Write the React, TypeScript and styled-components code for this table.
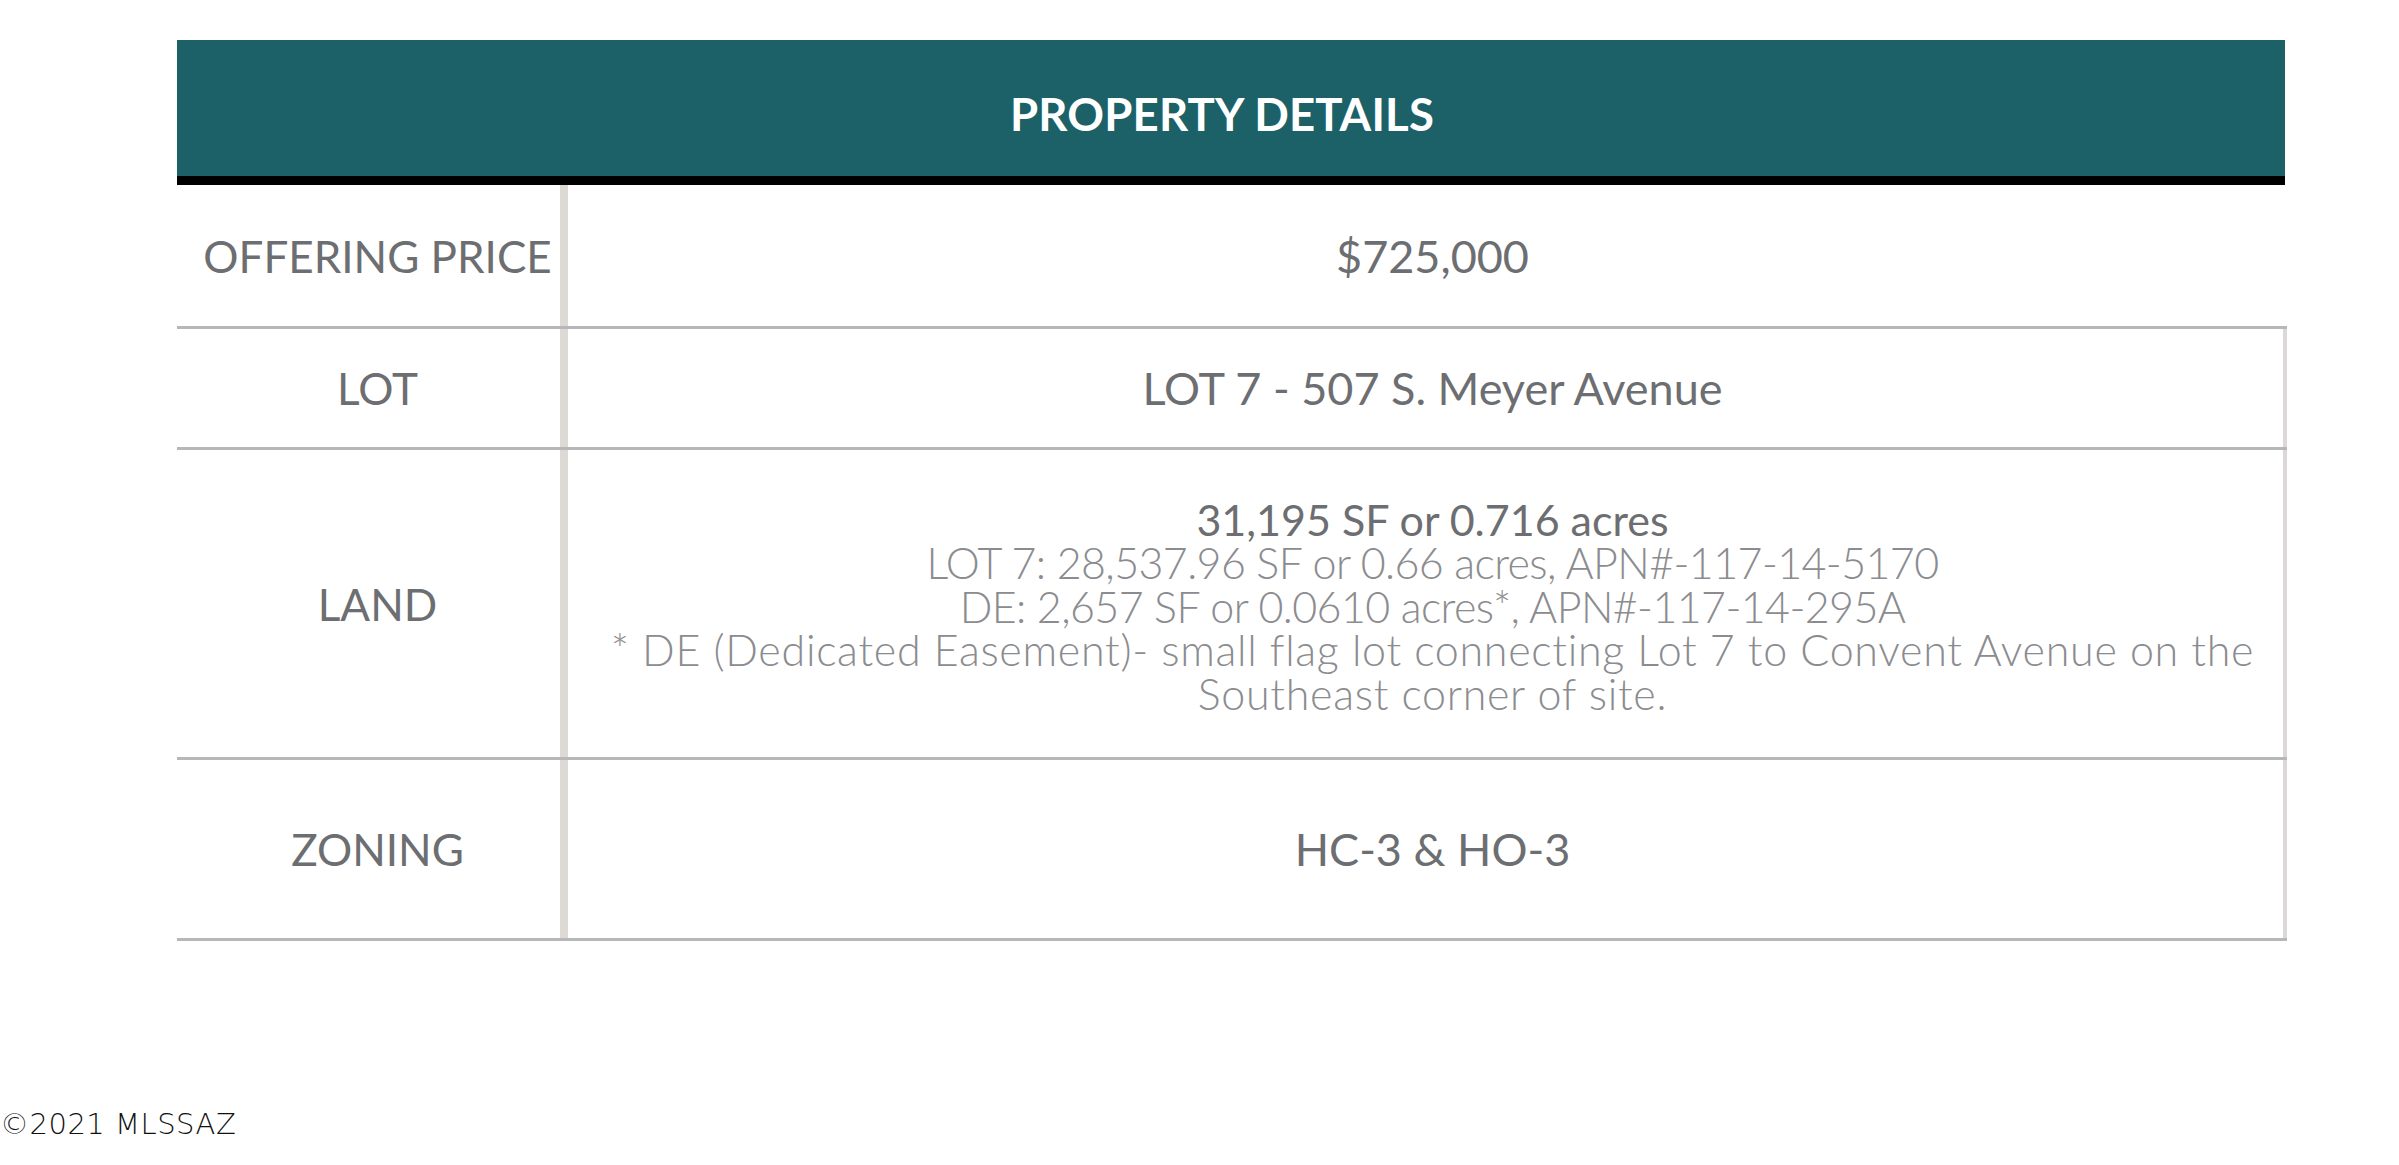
import React from 'react';
import styled, { createGlobalStyle } from 'styled-components';

const GlobalStyle = createGlobalStyle`
    html, body {
        margin: 0;
        padding: 0;
        background: #ffffff;
    }
    body {
        font-family: Lato, "Open Sans", "Liberation Sans", sans-serif;
        color: #6d6e71;
    }
`;

const Page = styled.div`
    width: 2399px;
    height: 1165px;
    padding: 40px 0 0 0;
    box-sizing: border-box;
    display: flex;
    flex-direction: column;
`;

const Sheet = styled.div`
    margin-left: 177px;
    width: 2110px;
    display: flex;
    flex-direction: column;
`;

const Banner = styled.div`
    width: 2108px;
    height: 126px;
    padding-top: 10px;
    background: #1c6168;
    border-bottom: 9px solid #000000;
    display: flex;
    align-items: center;
    justify-content: center;
    box-sizing: content-box;
`;

const BannerTitle = styled.h1`
    margin: 0 18px 0 0;
    font-size: 45.5px;
    font-weight: 700;
    color: #ffffff;
    letter-spacing: 0.2px;
`;

const Row = styled.div<{ $h: number }>`
    display: grid;
    grid-template-columns: 391px 1fr;
    height: ${p => p.$h}px;
    border-bottom: 3px solid #b6b7b9;
`;

const Label = styled.div`
    border-right: 8px solid #ddd9d5;
    display: flex;
    align-items: center;
    justify-content: center;
    padding-left: 18px;
    font-size: 44px;
    color: #6d6e71;
    white-space: nowrap;
`;

const Value = styled.div<{ $edge: boolean }>`
    border-right: 4px solid ${p => (p.$edge ? '#ddd8d8' : 'transparent')};
    display: flex;
    flex-direction: column;
    align-items: center;
    justify-content: center;
    padding-left: 14px;
    font-size: 45px;
    color: #6d6e71;
    white-space: nowrap;
`;

const LandBlock = styled.div`
    display: flex;
    flex-direction: column;
    align-items: center;
    padding-top: 6px;
`;

const Lead = styled.div`
    font-size: 43px;
    line-height: 43.5px;
    color: #6d6e71;
`;

const Note = styled.div<{ $wide?: boolean }>`
    font-size: 43px;
    line-height: 43.5px;
    font-weight: 300;
    color: #8b8c8f;
    letter-spacing: ${p => (p.$wide ? '0.7px' : '-0.6px')};
`;

const Copyright = styled.div`
    margin-top: 166px;
    font-family: "DejaVu Sans", sans-serif;
    font-weight: 200;
    font-size: 29px;
    color: #111111;
    letter-spacing: 0.5px;
`;

const details = [
    { label: 'OFFERING PRICE', value: '$725,000', h: 141, edge: false },
    { label: 'LOT', value: 'LOT 7 - 507 S. Meyer Avenue', h: 118, edge: true },
];

export default function App() {
    return (
        <>
            <GlobalStyle />
            <Page>
                <Sheet>
                    <Banner>
                        <BannerTitle>PROPERTY DETAILS</BannerTitle>
                    </Banner>
                    {details.map(d => (
                        <Row $h={d.h} key={d.label}>
                            <Label>{d.label}</Label>
                            <Value $edge={d.edge}>{d.value}</Value>
                        </Row>
                    ))}
                    <Row $h={307}>
                        <Label>LAND</Label>
                        <Value $edge={true}>
                            <LandBlock>
                                <Lead>31,195 SF or 0.716 acres</Lead>
                                <Note>LOT 7: 28,537.96 SF or 0.66 acres, APN#-117-14-5170</Note>
                                <Note>DE: 2,657 SF or 0.0610 acres*, APN#-117-14-295A</Note>
                                <Note $wide>* DE (Dedicated Easement)- small flag lot connecting Lot 7 to Convent Avenue on the</Note>
                                <Note $wide>Southeast corner of site.</Note>
                            </LandBlock>
                        </Value>
                    </Row>
                    <Row $h={178}>
                        <Label>ZONING</Label>
                        <Value $edge={true}>HC-3 &amp; HO-3</Value>
                    </Row>
                </Sheet>
                <Copyright>©2021 MLSSAZ</Copyright>
            </Page>
        </>
    );
}
